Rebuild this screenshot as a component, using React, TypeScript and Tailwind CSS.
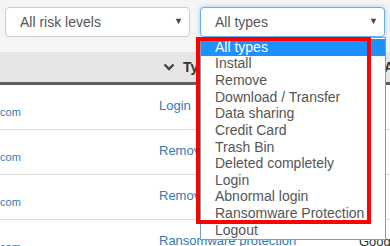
import React from 'react';

const types = [
  'All types',
  'Install',
  'Remove',
  'Download / Transfer',
  'Data sharing',
  'Credit Card',
  'Trash Bin',
  'Deleted completely',
  'Login',
  'Abnormal login',
  'Ransomware Protection',
  'Logout',
];

const rows = [
  { type: 'Login', extra: 'te', extraBlue: false },
  { type: 'Remove', extra: 'c', extraBlue: true },
  { type: 'Remove', extra: 'c', extraBlue: true },
  { type: 'Ransomware protection', extra: 'Google', extraBlue: false },
];

const Select: React.FC<{ label: string; focused?: boolean }> = ({ label, focused }) => (
  <div
    className={`flex h-[30px] flex-1 items-center justify-between rounded-[4px] border bg-white pl-[14px] pr-[6px] text-[14px] text-[#555] ${
      focused ? 'border-[#66afe9] shadow-[0_0_4px_rgba(102,175,233,0.6)]' : 'border-[#ccc]'
    }`}
  >
    <span>{label}</span>
    <span className="text-[9px] text-[#444]">▼</span>
  </div>
);

const App: React.FC = () => {
  return (
    <div
      className="relative h-[246px] w-[390px] overflow-hidden bg-white"
      style={{ fontFamily: '"Liberation Sans", Arial, sans-serif' }}
    >
      <div className="flex h-[52px] gap-[10px] bg-[#f5f5f5] px-[5px] pt-[7px]">
        <Select label="All risk levels" />
        <Select label="All types" focused />
      </div>

      <div className="flex h-[33px] items-center border-b-[3px] border-[#5f5f5f] bg-[#e6e6e6] text-[14px] font-bold text-[#333]">
        <div className="w-[163px]" />
        <div className="flex flex-1 items-center gap-[8px]">
          <svg width="12" height="8" viewBox="0 0 12 8">
            <path d="M1.5 1.5 L6 6 L10.5 1.5" fill="none" stroke="#444" strokeWidth="2.4" />
          </svg>
          <span>Type</span>
        </div>
        <div className="w-[7px] pl-[1px]">A</div>
      </div>

      {rows.map((r, i) => (
        <div key={i} className="flex h-[45px] border-b border-[#ddd]">
          <div className="flex w-[159px] items-end pb-[9px] text-[11px] text-[#337ab7]">
            <span className="-ml-[3px]">.com</span>
          </div>
          <div className="flex flex-1 items-center whitespace-nowrap pb-[2px] text-[13px] text-[#337ab7]">
            {r.type}
          </div>
          <div
            className={`flex w-[32px] items-center whitespace-nowrap pl-[1px] text-[13px] ${
              r.extraBlue ? 'text-[#337ab7]' : 'text-[#333]'
            }`}
          >
            {r.extra}
          </div>
        </div>
      ))}

      {/* open native dropdown list */}
      <div className="absolute left-[200px] top-[37px] w-[186px] border border-[#7f9db9] bg-white pt-[1px] text-[14px] text-[#555]">
        {types.map((t, i) => (
          <div
            key={t}
            className={`flex h-[16.64px] items-center pl-[14px] ${i === 0 ? 'bg-[#1e90ff] text-white' : ''}`}
          >
            {t}
          </div>
        ))}
      </div>

      {/* red annotation box */}
      <div className="absolute left-[196px] top-[37px] h-[187px] w-[175px] border-[4px] border-[#ff0000]" />
    </div>
  );
};

export default App;
